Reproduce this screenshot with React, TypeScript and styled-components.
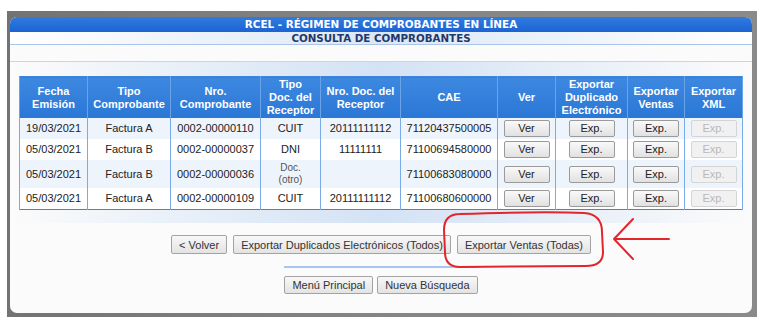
import React from "react";
import styled, { createGlobalStyle, css } from "styled-components";

const GlobalStyle = createGlobalStyle`
  html, body { margin: 0; padding: 0; background: #ffffff; }
  body { font-family: "Liberation Sans", Arial, sans-serif; }
  * { box-sizing: border-box; }
`;

const Page = styled.div`
  position: relative;
  width: 763px;
  height: 326px;
  padding: 11px 6px 9px 7px;
  background: #ffffff;
`;

const Frame = styled.div`
  height: 306px;
  padding: 6px 5px 4px 3px;
  background: linear-gradient(to right, #737373 0%, #858585 50%, #8a8a8a 100%);
`;

const Panel = styled.div`
  height: 296px;
  background: #fbfbfb;
  border-radius: 7px;
  overflow: hidden;
  display: flex;
  flex-direction: column;
`;

const TitleBar = styled.div`
  height: 15px;
  line-height: 15px;
  text-align: center;
  color: #ffffff;
  font-family: "DejaVu Sans", Verdana, sans-serif;
  font-weight: bold;
  font-size: 10.4px;
  background: linear-gradient(#2f7ce0, #1c63d2);
`;

const SubBar = styled.div`
  height: 13px;
  line-height: 12px;
  text-align: center;
  color: #22386a;
  font-family: "DejaVu Sans", Verdana, sans-serif;
  font-weight: bold;
  font-size: 10.3px;
  background: linear-gradient(to right, #ffffff 0%, #dbe7f6 50%, #ffffff 100%);
  border-bottom: 1px solid #a9c5ea;
`;

const TableWrap = styled.div`
  margin-top: 16px;
  padding: 14px 10px 13px 9px;
  border-top: 1px solid #c4d7f1;
  background: linear-gradient(to right, #fbfbfb 0%, #d3e2f5 50%, #fbfbfb 100%);
`;

const Table = styled.table`
  width: 723px;
  table-layout: fixed;
  border-collapse: collapse;
  border: 1px solid #3d86dc;
  font-size: 11px;
`;

const HeadCell = styled.th`
  padding: 1px 0;
  height: 41px;
  line-height: 13px;
  font-weight: bold;
  font-size: 11px;
  color: #ffffff;
  text-align: center;
  vertical-align: middle;
  background: linear-gradient(#3d88e0, #2a77d6);
  border-left: 1px solid #6aa3e8;
  border-right: 1px solid #6aa3e8;
`;

const Row = styled.tr<{ $alt?: boolean }>`
  background: ${(p) => (p.$alt ? "#eef4fc" : "#ffffff")};
`;

const Cell = styled.td<{ $small?: boolean }>`
  padding: 2px 0;
  text-align: center;
  vertical-align: middle;
  color: #222222;
  line-height: 13px;
  border-left: 1px solid #7aabe8;
  border-right: 1px solid #7aabe8;
  ${(p) =>
    p.$small &&
    css`
      font-size: 10px;
      line-height: 12px;
      color: #555555;
    `}
`;

const TableBtn = styled.button`
  display: inline-block;
  width: 46px;
  height: 17px;
  padding: 0;
  margin: 0;
  font-family: "Liberation Sans", Arial, sans-serif;
  font-size: 11px;
  line-height: 15px;
  color: #222222;
  border: 1px solid #9a9a9a;
  border-radius: 2px;
  background: linear-gradient(#f9f9f9, #e1e1e1);
  vertical-align: middle;
  &:disabled {
    color: #b8b8b8;
    border-color: #d4d4d4;
    background: #f1f1f1;
  }
`;

const ButtonRow = styled.div<{ $gap: number; $top: number }>`
  display: flex;
  justify-content: center;
  gap: ${(p) => p.$gap}px;
  margin-top: ${(p) => p.$top}px;
`;

const ActionBtn = styled.button<{ $h: number }>`
  height: ${(p) => p.$h}px;
  padding: 0 7px;
  margin: 0;
  font-family: "Liberation Sans", Arial, sans-serif;
  font-size: 11px;
  color: #333333;
  border: 1px solid #a3a3a3;
  border-radius: 2px;
  background: linear-gradient(#f8f8f8, #e3e3e3);
`;

const Separator = styled.div`
  width: 195px;
  height: 2px;
  margin: 12px auto 0;
  background: #a8c6ee;
`;

const Annotation = styled.svg`
  position: absolute;
  left: 0;
  top: 0;
  pointer-events: none;
`;

const cols = [68, 83, 90, 60, 80, 97, 58, 72, 57, 58];

const headers: React.ReactNode[] = [
  <>Fecha<br />Emisión</>,
  <>Tipo<br />Comprobante</>,
  <>Nro.<br />Comprobante</>,
  <>Tipo<br />Doc. del<br />Receptor</>,
  <>Nro. Doc. del<br />Receptor</>,
  <>CAE</>,
  <>Ver</>,
  <>Exportar<br />Duplicado<br />Electrónico</>,
  <>Exportar<br />Ventas</>,
  <>Exportar<br />XML</>,
];

type Rec = {
  fecha: string;
  tipo: string;
  nro: string;
  doc: string;
  docOtro?: boolean;
  nroDoc: string;
  cae: string;
};

const rows: Rec[] = [
  { fecha: "19/03/2021", tipo: "Factura A", nro: "0002-00000110", doc: "CUIT", nroDoc: "20111111112", cae: "71120437500005" },
  { fecha: "05/03/2021", tipo: "Factura B", nro: "0002-00000037", doc: "DNI", nroDoc: "11111111", cae: "71100694580000" },
  { fecha: "05/03/2021", tipo: "Factura B", nro: "0002-00000036", doc: "", docOtro: true, nroDoc: "", cae: "71100683080000" },
  { fecha: "05/03/2021", tipo: "Factura A", nro: "0002-00000109", doc: "CUIT", nroDoc: "20111111112", cae: "71100680600000" },
];

export default function App() {
  return (
    <>
      <GlobalStyle />
      <Page>
        <Frame>
          <Panel>
            <TitleBar>RCEL - RÉGIMEN DE COMPROBANTES EN LÍNEA</TitleBar>
            <SubBar>CONSULTA DE COMPROBANTES</SubBar>
            <TableWrap>
              <Table>
                <colgroup>
                  {cols.map((w, i) => (
                    <col key={i} style={{ width: w }} />
                  ))}
                </colgroup>
                <thead>
                  <tr>
                    {headers.map((h, i) => (
                      <HeadCell key={i}>{h}</HeadCell>
                    ))}
                  </tr>
                </thead>
                <tbody>
                  {rows.map((r, i) => (
                    <Row key={i} $alt={i % 2 === 0}>
                      <Cell>{r.fecha}</Cell>
                      <Cell>{r.tipo}</Cell>
                      <Cell>{r.nro}</Cell>
                      {r.docOtro ? (
                        <Cell $small>
                          Doc.
                          <br />
                          (otro)
                        </Cell>
                      ) : (
                        <Cell>{r.doc}</Cell>
                      )}
                      <Cell>{r.nroDoc}</Cell>
                      <Cell>{r.cae}</Cell>
                      <Cell>
                        <TableBtn>Ver</TableBtn>
                      </Cell>
                      <Cell>
                        <TableBtn>Exp.</TableBtn>
                      </Cell>
                      <Cell>
                        <TableBtn>Exp.</TableBtn>
                      </Cell>
                      <Cell>
                        <TableBtn disabled>Exp.</TableBtn>
                      </Cell>
                    </Row>
                  ))}
                </tbody>
              </Table>
            </TableWrap>
            <ButtonRow $gap={6} $top={12}>
              <ActionBtn $h={19}>&lt; Volver</ActionBtn>
              <ActionBtn $h={19}>Exportar Duplicados Electrónicos (Todos)</ActionBtn>
              <ActionBtn $h={19}>Exportar Ventas (Todas)</ActionBtn>
            </ButtonRow>
            <Separator />
            <ButtonRow $gap={4} $top={8}>
              <ActionBtn $h={18}>Menú Principal</ActionBtn>
              <ActionBtn $h={18}>Nueva Búsqueda</ActionBtn>
            </ButtonRow>
          </Panel>
        </Frame>
        <Annotation width={763} height={326} viewBox="0 0 763 326">
          <path
            d="M460 214 C520 212 560 212 584 213 C598 214 602 222 602 232 L603 252 C603 262 597 266 586 266 L460 267 C450 267 445 262 445 252 L444 230 C444 219 449 214 460 214 Z"
            fill="none"
            stroke="#e3262b"
            strokeWidth={2}
          />
          <path
            d="M669 239 L614 239 M633 219 L614 239 L633 259"
            fill="none"
            stroke="#e3262b"
            strokeWidth={2}
            strokeLinecap="round"
            strokeLinejoin="round"
          />
        </Annotation>
      </Page>
    </>
  );
}
